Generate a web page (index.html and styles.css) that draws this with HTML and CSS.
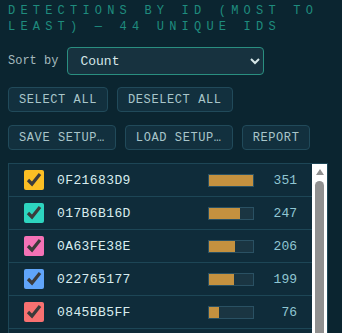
FILE: index.html
```html
<!DOCTYPE html>
<html lang="en">
<head>
    <meta charset="UTF-8">
    <meta name="viewport" content="width=device-width, initial-scale=1.0">
    <title>Detections by ID</title>
    <link rel="stylesheet" href="styles.css">
</head>
<body>
    <h2 class="section-title">Detections by ID (most to least) — 44 unique IDs</h2>

    <div class="sort-row">
        <label for="sort-by">Sort by</label>
        <select id="sort-by">
            <option>Count</option>
            <option>ID</option>
        </select>
    </div>

    <div class="btn-row">
        <button class="btn">Select all</button>
        <button class="btn">Deselect all</button>
    </div>
    <div class="btn-row">
        <button class="btn">Save setup…</button>
        <button class="btn">Load setup…</button>
        <button class="btn">Report</button>
    </div>

    <div class="list-box">
        <div id="id-list" class="id-list"></div>
        <div class="scroll-track">
            <span class="scroll-arrow"></span>
            <span class="scroll-thumb"></span>
        </div>
    </div>

    <script>
        const colors = ['#fbbf24', '#2dd4bf', '#f472b6', '#60a5fa', '#f87171', '#a78bfa', '#34d399', '#fb923c'];
        const ids = [
            ['0F21683D9', 351],
            ['017B6B16D', 247],
            ['0A63FE38E', 206],
            ['022765177', 199],
            ['0845BB5FF', 76]
        ];
        // fill the rest of the 44 ids with smaller counts
        for (let i = ids.length; i < 44; i++) {
            const hex = (0x0100000000 + i * 0x3a7f1d9).toString(16).toUpperCase().slice(1);
            ids.push([hex, Math.max(1, 70 - i)]);
        }

        const max = ids[0][1];
        const list = document.getElementById('id-list');
        ids.forEach(([id, count], index) => {
            const row = document.createElement('label');
            row.className = 'id-row';
            row.innerHTML = `
                <input type="checkbox" checked style="accent-color: ${colors[index % colors.length]}">
                <span class="id-name">${id}</span>
                <span class="bar"><span class="bar-fill" style="width: ${(count / max * 100).toFixed(1)}%"></span></span>
                <span class="id-count">${count}</span>`;
            list.appendChild(row);
        });
    </script>
</body>
</html>
```

FILE: styles.css
```css
body {
    margin: 0;
    padding: 3px 8px 8px;
    background-color: #0b2530;
    color: #c9dde0;
    font-family: "Courier New", "Liberation Mono", monospace;
}
.section-title {
    margin: 0;
    font-size: 12px;
    font-weight: normal;
    line-height: 16px;
    letter-spacing: 5.2px;
    text-transform: uppercase;
    color: #1f8c7e;
}
.sort-row {
    display: flex;
    align-items: center;
    gap: 9px;
    margin-top: 12px;
    font-size: 12px;
    color: #a3b9bd;
}
.sort-row select {
    width: 197px;
    height: 28px;
    padding: 0 8px;
    background-color: #17323f;
    color: #d6e6e8;
    border: 1px solid #2a8f80;
    border-radius: 4px;
    font-family: inherit;
    font-size: 13px;
}
.btn-row {
    display: flex;
    gap: 9px;
    margin-top: 12px;
}
.btn-row + .btn-row {
    margin-top: 13px;
}
.btn {
    height: 25px;
    padding: 0 10px;
    background-color: #12303e;
    color: #a9c6ca;
    border: 1px solid #214a5a;
    border-radius: 4px;
    font-family: inherit;
    font-size: 12px;
    letter-spacing: 0.6px;
    text-transform: uppercase;
    cursor: pointer;
}
.list-box {
    display: flex;
    margin-top: 13px;
    width: 320px;
    height: 520px;
    box-sizing: border-box;
    background-color: #0f2c3a;
    border: 1px solid #1d4656;
}
.id-list {
    flex: 1;
    overflow: hidden;
}
.scroll-track {
    display: flex;
    flex-direction: column;
    align-items: center;
    width: 15px;
    background-color: #ffffff;
}
.scroll-arrow {
    margin-top: 5px;
    border-left: 4.5px solid transparent;
    border-right: 4.5px solid transparent;
    border-bottom: 6px solid #909090;
}
.scroll-thumb {
    margin-top: 6px;
    width: 9px;
    height: 180px;
    border-radius: 5px;
    background-color: #909090;
}
.id-row {
    display: flex;
    align-items: center;
    height: 33px;
    padding: 0 15px;
    border-bottom: 1px solid #1d4656;
    box-sizing: border-box;
}
.id-row input {
    width: 20px;
    height: 20px;
    margin: 0 13px 0 0;
}
.id-name {
    flex: 1;
    font-size: 13px;
    letter-spacing: 0.4px;
    color: #d8ecee;
}
.bar {
    width: 46px;
    height: 13px;
    box-sizing: border-box;
    border: 1px solid #2a5163;
    background-color: #1a3542;
}
.bar-fill {
    display: block;
    height: 100%;
    background-color: #c4913f;
}
.id-count {
    width: 30px;
    margin-left: 13px;
    text-align: right;
    font-family: "Liberation Mono", monospace;
    font-size: 13px;
    color: #8fc6d2;
}
```
